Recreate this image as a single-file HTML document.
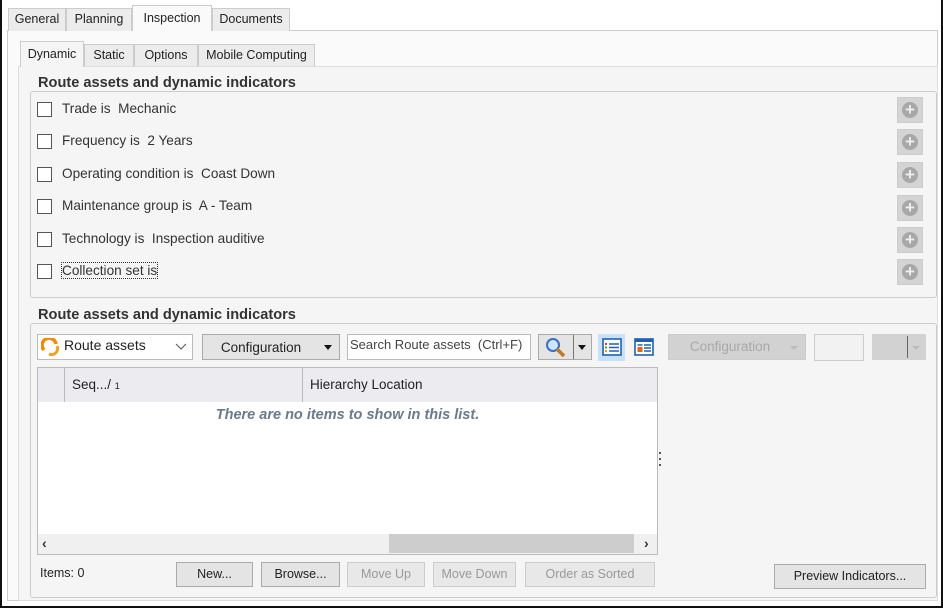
<!DOCTYPE html>
<html><head><meta charset="utf-8"><style>
*{box-sizing:border-box;margin:0;padding:0}
body{width:943px;height:608px;overflow:hidden;background:#fff;font-family:"Liberation Sans",sans-serif;font-size:13px;color:#222;position:relative}
.a{position:absolute}
.tab{position:absolute;border:1px solid #ccc;border-bottom:none;background:#ececec;text-align:center;font-size:12.5px;line-height:21px}
.btn{position:absolute;border:1px solid #aaa;background:#e4e4e4;text-align:center;font-size:12.5px;line-height:23px;color:#222}
.dis{color:#999;border-color:#ccc;background:#e8e8e8}
.cb{position:absolute;left:37px;width:15px;height:15px;border:1px solid #555;background:#fff}
.lbl{position:absolute;left:62px;font-size:13.6px;color:#333}
.plus{position:absolute;left:897px;width:26px;height:26px;background:#d4d4d4;border:1px solid #ccc}
.plus:before{content:"";position:absolute;left:4px;top:4px;width:16px;height:16px;border-radius:50%;background:#a8a8a8}
.plus:after{content:"+";position:absolute;left:0;top:1px;width:24px;text-align:center;color:#eee;font-weight:bold;font-size:17px;line-height:22px}
.gt{position:absolute;font-weight:bold;font-size:14.6px;color:#333;background:#f5f5f5;padding:0 6px 0 2px}
</style></head><body>
<div class="a" style="left:0;top:0;width:943px;height:608px;border:2px solid #111;border-top:none"></div>
<div class="a" style="left:7px;top:30px;width:931px;height:571px;background:#fafafa;border:1px solid #ccc"></div>
<div class="tab" style="left:8px;top:8px;width:58px;height:23px">General</div>
<div class="tab" style="left:66px;top:8px;width:66px;height:23px">Planning</div>
<div class="tab" style="left:132px;top:5px;width:80px;height:26px;background:#fafafa;line-height:24px">Inspection</div>
<div class="tab" style="left:212px;top:8px;width:78px;height:23px">Documents</div>
<div class="a" style="left:18px;top:66px;width:920px;height:535px;background:#f5f5f5;border:1px solid #ddd"></div>
<div class="tab" style="left:20px;top:41px;width:64px;height:26px;background:#f5f5f5;line-height:24px">Dynamic</div>
<div class="tab" style="left:84px;top:44px;width:50px;height:22px">Static</div>
<div class="tab" style="left:134px;top:44px;width:64px;height:22px">Options</div>
<div class="tab" style="left:198px;top:44px;width:117px;height:22px">Mobile Computing</div>

<div class="a" style="left:30px;top:91px;width:907px;height:207px;border:1px solid #ccc;border-radius:3px"></div>
<div class="gt" style="left:36px;top:75px">Route assets and dynamic indicators</div>
<div class="cb" style="top:102px"></div><div class="lbl" style="top:101px">Trade is&nbsp; Mechanic</div>
<div class="cb" style="top:134px"></div><div class="lbl" style="top:133px">Frequency is&nbsp; 2 Years</div>
<div class="cb" style="top:167px"></div><div class="lbl" style="top:166px">Operating condition is&nbsp; Coast Down</div>
<div class="cb" style="top:199px"></div><div class="lbl" style="top:198px">Maintenance group is&nbsp; A - Team</div>
<div class="cb" style="top:232px"></div><div class="lbl" style="top:231px">Technology is&nbsp; Inspection auditive</div>
<div class="cb" style="top:264px"></div><div class="lbl" style="top:263px;outline:1px dotted #333">Collection set is</div>
<div class="plus" style="top:97px"></div><div class="plus" style="top:129px"></div><div class="plus" style="top:162px"></div>
<div class="plus" style="top:195px"></div><div class="plus" style="top:227px"></div><div class="plus" style="top:259px"></div>

<div class="a" style="left:30px;top:323px;width:907px;height:275px;border:1px solid #ccc;border-radius:3px"></div>
<div class="gt" style="left:36px;top:307px">Route assets and dynamic indicators</div>
<div class="a" style="left:37px;top:334px;width:156px;height:26px;background:#fff;border:1px solid #bbb"></div>
<svg class="a" style="left:41px;top:338px" width="20" height="18"><path d="M3 12 A7 7 0 1 1 15 6" stroke="#f08a00" stroke-width="3.5" fill="none"/><path d="M16 8 A6 6 0 0 1 8 16" stroke="#f5a020" stroke-width="3" fill="none"/></svg>
<div class="a" style="left:64px;top:337px;font-size:14px">Route assets</div>
<svg class="a" style="left:175px;top:343px" width="12" height="8"><path d="M1 1 L6 6 L11 1" stroke="#555" fill="none"/></svg>
<div class="btn" style="left:202px;top:334px;width:138px;height:26px;line-height:25px;padding-right:20px;font-size:13.5px">Configuration</div>
<div class="a" style="left:324px;top:345px;border:4px solid transparent;border-top:5px solid #111"></div>
<div class="a" style="left:347px;top:334px;width:184px;height:26px;background:#fff;border:1px solid #bbb;padding:2px 2px;font-size:13px;color:#444;white-space:nowrap;overflow:hidden">Search Route assets&nbsp; (Ctrl+F)</div>
<div class="btn" style="left:538px;top:334px;width:54px;height:26px"></div>
<div class="a" style="left:573px;top:335px;width:1px;height:24px;background:#777"></div>
<svg class="a" style="left:544px;top:337px" width="24" height="22"><circle cx="9" cy="8" r="6" fill="#cfe4ff" stroke="#3a6fc0" stroke-width="2"/><path d="M13 12 L20 19" stroke="#c07a20" stroke-width="3.5"/></svg>
<div class="a" style="left:578px;top:345px;border:4px solid transparent;border-top:5px solid #111"></div>
<div class="a" style="left:598px;top:334px;width:27px;height:27px;background:#c8e0fa"></div>
<svg class="a" style="left:602px;top:338px" width="20" height="18"><rect x="1" y="1" width="18" height="16" fill="#fff" stroke="#2060b0" stroke-width="1.6"/><path d="M7 6h10M7 9.5h10M7 13h10" stroke="#2060b0" stroke-width="1.6"/><rect x="3" y="5" width="2" height="2" fill="#d33"/><rect x="3" y="8.5" width="2" height="2" fill="#3a3"/><rect x="3" y="12" width="2" height="2" fill="#e90"/></svg>
<svg class="a" style="left:634px;top:338px" width="20" height="18"><rect x="1" y="1" width="18" height="16" fill="#fff" stroke="#2060b0" stroke-width="1.6"/><rect x="1" y="1" width="18" height="3" fill="#2060b0"/><rect x="3.5" y="9" width="5" height="5" fill="#d76a20"/><path d="M10 7h7M10 10h7M10 13h7M3.5 7h5" stroke="#2060b0" stroke-width="1.4"/></svg>
<div class="btn dis" style="left:668px;top:334px;width:138px;height:26px;background:#d2d2d2;color:#a8a8a8;padding-right:14px;border-color:#ccc;font-size:13.5px">Configuration</div>
<div class="a" style="left:790px;top:346px;border:4px solid transparent;border-top:4px solid #bbb"></div>
<div class="a" style="left:814px;top:334px;width:50px;height:27px;border:1px solid #ccc;background:#f2f2f2"></div>
<div class="a" style="left:872px;top:334px;width:54px;height:26px;background:#d2d2d2"></div>
<div class="a" style="left:907px;top:336px;width:1px;height:22px;background:#666"></div>
<div class="a" style="left:912px;top:346px;border:4px solid transparent;border-top:4px solid #bbb"></div>

<div class="a" style="left:37px;top:367px;width:621px;height:188px;background:#fff;border:1px solid #bbb"></div>
<div class="a" style="left:38px;top:368px;width:619px;height:34px;background:#ececf0"></div>
<div class="a" style="left:64px;top:368px;width:1px;height:34px;background:#bbb"></div>
<div class="a" style="left:302px;top:368px;width:1px;height:34px;background:#bbb"></div>
<div class="a" style="left:72px;top:377px;font-size:13.5px">Seq.../ <span style="font-size:9px">1</span></div>
<div class="a" style="left:310px;top:377px;font-size:13.5px">Hierarchy Location</div>
<div class="a" style="left:38px;top:407px;width:619px;text-align:center;font-style:italic;font-weight:bold;color:#6a7a8a;font-size:14.5px">There are no items to show in this list.</div>
<div class="a" style="left:38px;top:534px;width:619px;height:20px;background:#f0f0f0"></div>
<div class="a" style="left:389px;top:534px;width:245px;height:19px;background:#cdcdcd"></div>
<div class="a" style="left:42px;top:535px;font-size:14px;font-weight:bold;color:#333">‹</div>
<div class="a" style="left:644px;top:535px;font-size:14px;font-weight:bold;color:#333">›</div>
<div class="a" style="left:659px;top:452px;width:2px;height:2px;background:#555;box-shadow:0 6px #555,0 12px #555"></div>

<div class="a" style="left:40px;top:566px;font-size:12.5px">Items: 0</div>
<div class="btn" style="left:176px;top:562px;width:77px;height:25px">New...</div>
<div class="btn" style="left:261px;top:562px;width:79px;height:25px">Browse...</div>
<div class="btn dis" style="left:347px;top:562px;width:78px;height:25px">Move Up</div>
<div class="btn dis" style="left:433px;top:562px;width:83px;height:25px">Move Down</div>
<div class="btn dis" style="left:525px;top:562px;width:130px;height:25px">Order as Sorted</div>
<div class="btn" style="left:774px;top:564px;width:152px;height:25px">Preview Indicators...</div>
</body></html>
